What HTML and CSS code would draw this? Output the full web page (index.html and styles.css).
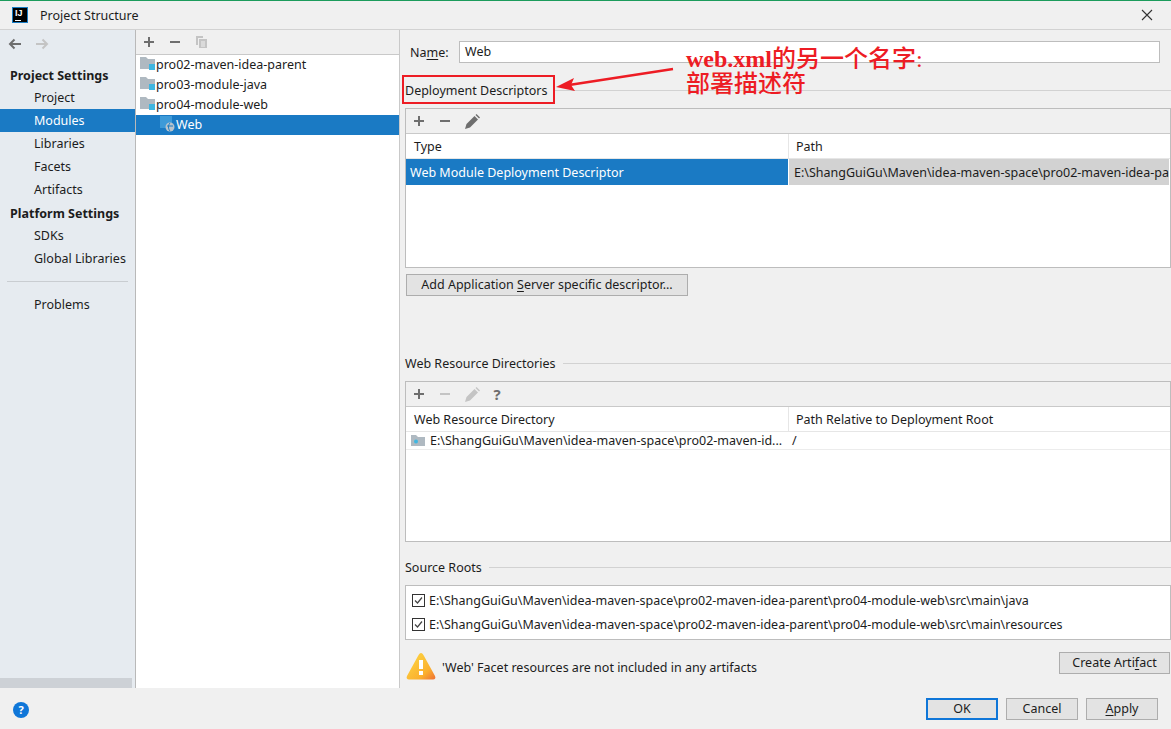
FILE: index.html
```html
<!DOCTYPE html>
<html lang="zh-CN">
<head>
    <meta charset="UTF-8">
    <title>Project Structure</title>
    <link rel="stylesheet" href="styles.css">
</head>
<body>
<div class="dialog">

    <!-- Title bar -->
    <div class="titlebar">
        <div class="logo"><span>IJ</span><i></i></div>
        <span class="title">Project Structure</span>
        <svg class="close" width="12" height="12" viewBox="0 0 12 12"><path d="M1 1l10 10M11 1L1 11" stroke="#333" stroke-width="1.1" fill="none"/></svg>
    </div>

    <div class="main">
        <!-- Left nav -->
        <div class="sidebar">
            <div class="nav-arrows">
                <svg width="14" height="12" viewBox="0 0 14 12"><path d="M13 6H2M6.500 1.500L2 6l4.500 4.500" stroke="#6e6e6e" stroke-width="2" fill="none"/></svg>
                <svg width="14" height="12" viewBox="0 0 14 12"><path d="M1 6h11M7.500 1.500L12 6l-4.500 4.500" stroke="#c4c4c4" stroke-width="2" fill="none"/></svg>
            </div>
            <div class="nav-head">Project Settings</div>
            <div class="nav-item">Project</div>
            <div class="nav-item selected">Modules</div>
            <div class="nav-item">Libraries</div>
            <div class="nav-item">Facets</div>
            <div class="nav-item">Artifacts</div>
            <div class="nav-head second">Platform Settings</div>
            <div class="nav-item">SDKs</div>
            <div class="nav-item">Global Libraries</div>
            <div class="nav-sep"></div>
            <div class="nav-item">Problems</div>
            <div class="side-scroll"></div>
        </div>

        <!-- Module tree -->
        <div class="tree">
            <div class="toolbar tree-tools">
                <svg class="tool" width="12" height="12" viewBox="0 0 12 12"><path d="M6 1v10M1 6h10" stroke="#6e6e6e" stroke-width="2"/></svg>
                <svg class="tool" width="12" height="12" viewBox="0 0 12 12"><path d="M1 6h10" stroke="#6e6e6e" stroke-width="2"/></svg>
                <svg class="tool" width="13" height="14" viewBox="0 0 13 14"><path d="M1 1h7v2H3v7H1z" fill="#c4c4c4"/><path d="M4 4h8v9H4z" fill="#c4c4c4"/><path d="M6 7h4M6 9h4M6 11h4" stroke="#f0f0f0"/></svg>
            </div>
            <div class="tree-row">
                <svg class="folder" width="16" height="14" viewBox="0 0 16 14"><path d="M0 0h6l2 2h7v10H0z" fill="#afb9c1"/><rect x="9" y="7" width="6" height="6" fill="#40b6e0"/></svg>
                pro02-maven-idea-parent
            </div>
            <div class="tree-row">
                <svg class="folder" width="16" height="14" viewBox="0 0 16 14"><path d="M0 0h6l2 2h7v10H0z" fill="#afb9c1"/><rect x="9" y="7" width="6" height="6" fill="#40b6e0"/></svg>
                pro03-module-java
            </div>
            <div class="tree-row">
                <svg class="folder" width="16" height="14" viewBox="0 0 16 14"><path d="M0 0h6l2 2h7v10H0z" fill="#afb9c1"/><rect x="9" y="7" width="6" height="6" fill="#40b6e0"/></svg>
                pro04-module-web
            </div>
            <div class="tree-row selected child">
                <svg class="folder" width="16" height="16" viewBox="0 0 16 16"><rect x="0" y="0" width="12" height="12" fill="#3d9ad8"/><circle cx="10" cy="11" r="4.500" fill="#b9c4cc"/><path d="M7 10h6M10 7c-2 2-2 6 0 8" stroke="#1a7dc4" fill="none"/></svg>
                Web
            </div>
        </div>

        <!-- Facet settings -->
        <div class="content">
            <div class="name-row">
                <label class="name-label">Na<u>m</u>e:</label>
                <div class="name-input">Web</div>
            </div>

            <div class="group-title dd-title"><span>Deployment Descriptors</span></div>
            <div class="table dd-table">
                <div class="toolbar table-tools">
                    <svg class="tool" width="12" height="12" viewBox="0 0 12 12"><path d="M6 1v10M1 6h10" stroke="#6e6e6e" stroke-width="2"/></svg>
                    <svg class="tool" width="12" height="12" viewBox="0 0 12 12"><path d="M1 6h10" stroke="#6e6e6e" stroke-width="2"/></svg>
                    <svg class="tool" width="15" height="15" viewBox="0 0 15 15"><path d="M0 15l1.500-5L9.500 2l3.500 3.500L5 13.500z" fill="#6e6e6e"/><path d="M10.500 1l1-1L15 3.500l-1 1z" fill="#6e6e6e"/></svg>
                </div>
                <div class="thead">
                    <div class="col-a">Type</div>
                    <div class="col-b">Path</div>
                </div>
                <div class="trow dd-row">
                    <div class="col-a cell-blue">Web Module Deployment Descriptor</div>
                    <div class="col-b cell-grey">E:\ShangGuiGu\Maven\idea-maven-space\pro02-maven-idea-pa</div>
                </div>
            </div>
            <button class="btn add-btn">Add Application <u>S</u>erver specific descriptor...</button>

            <div class="group-title wr-title"><span>Web Resource Directories</span></div>
            <div class="table wr-table">
                <div class="toolbar table-tools">
                    <svg class="tool" width="12" height="12" viewBox="0 0 12 12"><path d="M6 1v10M1 6h10" stroke="#6e6e6e" stroke-width="2"/></svg>
                    <svg class="tool" width="12" height="12" viewBox="0 0 12 12"><path d="M1 6h10" stroke="#c4c4c4" stroke-width="2"/></svg>
                    <svg class="tool" width="15" height="15" viewBox="0 0 15 15"><path d="M0 15l1.500-5L9.500 2l3.500 3.500L5 13.500z" fill="#c4c4c4"/><path d="M10.500 1l1-1L15 3.500l-1 1z" fill="#c4c4c4"/></svg>
                    <span class="tool help-mark">?</span>
                </div>
                <div class="thead">
                    <div class="col-a">Web Resource Directory</div>
                    <div class="col-b">Path Relative to Deployment Root</div>
                </div>
                <div class="trow wr-row">
                    <div class="col-a wr-path">
                        <svg class="wr-icon" width="14" height="12" viewBox="0 0 14 12"><path d="M0 0h5l2 2h7v9H0z" fill="#afb9c1"/><circle cx="5" cy="6.500" r="2" fill="#40b6e0"/></svg>
                        <span>E:\ShangGuiGu\Maven\idea-maven-space\pro02-maven-id...</span>
                    </div>
                    <div class="col-b wr-rel">/</div>
                </div>
            </div>

            <div class="group-title sr-title"><span>Source Roots</span></div>
            <div class="roots">
                <div class="root-row">
                    <svg class="check" width="13" height="13" viewBox="0 0 13 13"><rect x=".5" y=".5" width="12" height="12" fill="#fff" stroke="#333"/><path d="M3 6.500l2.500 2.500L10 3.500" stroke="#444" stroke-width="1.200" fill="none"/></svg>
                    <span>E:\ShangGuiGu\Maven\idea-maven-space\pro02-maven-idea-parent\pro04-module-web\src\main\java</span>
                </div>
                <div class="root-row">
                    <svg class="check" width="13" height="13" viewBox="0 0 13 13"><rect x=".5" y=".5" width="12" height="12" fill="#fff" stroke="#333"/><path d="M3 6.500l2.500 2.500L10 3.500" stroke="#444" stroke-width="1.200" fill="none"/></svg>
                    <span>E:\ShangGuiGu\Maven\idea-maven-space\pro02-maven-idea-parent\pro04-module-web\src\main\resources</span>
                </div>
            </div>

            <div class="warn-row">
                <svg width="30" height="27" viewBox="0 0 30 27">
                    <defs><linearGradient id="warnfill" x1="0" y1="0" x2="1" y2="1"><stop offset="0.300" stop-color="#fcc93c"/><stop offset="0.700" stop-color="#fbb02e"/><stop offset="1" stop-color="#ee6f35"/></linearGradient></defs>
                    <path d="M15 0c1 0 2 1 3 3l11 20c1 2 0 3.500-2 3.500H3c-2 0-3-1.500-2-3.500L12 3c1-2 2-3 3-3z" fill="url(#warnfill)"/>
                    <path d="M13 7h4v9h-4zM13 18h4v4h-4z" fill="#fff"/>
                </svg>
                <span class="warn-text">'Web' Facet resources are not included in any artifacts</span>
                <button class="btn artifact-btn">Create Arti<u>f</u>act</button>
            </div>
        </div>
    </div>

    <!-- Footer -->
    <div class="footer">
        <div class="help">?</div>
        <div class="footer-btns">
            <button class="btn foot-btn default">OK</button>
            <button class="btn foot-btn">Cancel</button>
            <button class="btn foot-btn"><u>A</u>pply</button>
        </div>
    </div>

    <!-- Red annotation drawn on the screenshot -->
    <div class="note-box"></div>
    <svg class="note-arrow" width="125" height="30" viewBox="0 0 125 30">
        <path d="M118 3L14 19" stroke="#ed1c24" stroke-width="2.500" fill="none"/>
        <path d="M1 21l18-9-3 7 4 6z" fill="#ed1c24"/>
    </svg>
    <div class="note-text"><b>web.xml</b>的另一个名字:<br>部署描述符</div>
</div>
</body>
</html>
```

FILE: styles.css
```css
* {
    box-sizing: border-box;
}
html, body {
    margin: 0;
    height: 100%;
}
body {
    font-family: "Noto Sans", "Noto Sans CJK SC", sans-serif;
    font-size: 12.5px;
    color: #1c1c1c;
    background: #f0f0f0;
    overflow: hidden;
}
.dialog {
    position: relative;
    width: 1171px;
    height: 729px;
    display: flex;
    flex-direction: column;
}
u {
    text-underline-offset: 2px;
}

/* title bar */
.titlebar {
    height: 30px;
    flex: none;
    display: flex;
    align-items: center;
    padding: 0 18px 0 12px;
    border-top: 1px solid #1c9c5c;
    border-bottom: 1px solid #d2d2d2;
    background: #f0f0f0;
}
.logo {
    width: 16px;
    height: 16px;
    background: #000;
    outline: 1px solid #1a7dc4;
    outline-offset: -1px;
    color: #fff;
    font-family: "Liberation Sans", sans-serif;
    font-size: 9px;
    font-weight: bold;
    line-height: 9px;
    padding: 2px 0 0 3px;
    position: relative;
}
.logo i {
    position: absolute;
    left: 3px;
    bottom: 2px;
    width: 6px;
    height: 1px;
    background: #fff;
}
.title {
    margin-left: 12px;
}
.close {
    margin-left: auto;
}

.main {
    flex: 1;
    display: flex;
    min-height: 0;
}

/* left nav */
.sidebar {
    width: 136px;
    flex: none;
    background: #e6ebf0;
    border-right: 1px solid #b9b9b9;
    position: relative;
}
.nav-arrows {
    height: 35px;
    padding: 8px 0 0 8px;
    display: flex;
    gap: 13px;
}
.nav-head {
    height: 21px;
    line-height: 22px;
    padding-left: 10px;
    font-weight: bold;
}
.nav-head.second {
    margin-top: 1px;
    height: 22px;
    line-height: 24px;
}
.nav-item {
    height: 23px;
    line-height: 23px;
    padding-left: 34px;
}
.nav-item.selected {
    background: #1a7ac4;
    color: #fff;
}
.nav-sep {
    height: 1px;
    margin: 11px 7px 11px 7px;
    background: #c9cdd1;
}
.side-scroll {
    position: absolute;
    left: 0;
    right: 3px;
    bottom: 0;
    height: 10px;
    background: #cdd1d6;
}

/* module tree */
.tree {
    width: 264px;
    flex: none;
    background: #fff;
    border-right: 1px solid #c9c9c9;
}
.toolbar {
    display: flex;
    align-items: center;
    background: #f0f0f0;
}
.tree-tools {
    height: 25px;
    padding-left: 7px;
    gap: 14px;
    border-bottom: 1px solid #c9c9c9;
}
.tree-row {
    height: 20px;
    display: flex;
    align-items: center;
    padding: 0 0 2px 4px;
}
.tree-row.child {
    padding-left: 24px;
}
.tree-row.selected {
    background: #1a7ac4;
    color: #fff;
}

/* right panel */
.content {
    flex: 1;
    min-width: 0;
    padding: 11px 0 0 5px;
    background: #f0f0f0;
}
.name-row {
    display: flex;
    align-items: center;
    height: 22px;
    padding-left: 5px;
}
.name-label {
    width: 49px;
}
.name-input {
    width: 701px;
    height: 22px;
    line-height: 20px;
    padding-left: 5px;
    background: #fff;
    border: 1px solid #bdbdbd;
}
.group-title {
    display: flex;
    align-items: center;
    gap: 7px;
    height: 18px;
}
.group-title::after {
    content: "";
    flex: 1;
    height: 1px;
    background: #d2d2d2;
}
.dd-title {
    margin-top: 18px;
}
.table {
    border: 1px solid #bdbdbd;
    background: #fff;
    width: 766px;
    overflow: hidden;
}
.dd-table {
    margin-top: 9px;
    height: 160px;
}
.wr-table {
    height: 161px;
    margin-top: 9px;
}
.table-tools {
    height: 25px;
    padding-left: 7px;
    gap: 14px;
    border-bottom: 1px solid #c9c9c9;
}
.help-mark {
    width: 12px;
    margin-left: -3px;
    color: #6e6e6e;
    font-size: 15px;
    font-weight: bold;
    text-align: center;
}
.thead {
    height: 25px;
    display: flex;
    align-items: center;
    border-bottom: 1px solid #e6e6e6;
}
.col-a {
    width: 382px;
    flex: none;
    padding-left: 8px;
}
.col-b {
    flex: 1;
    min-width: 0;
    padding-left: 7px;
    white-space: nowrap;
}
.thead .col-b {
    border-left: 1px solid #e6e6e6;
    line-height: 22px;
    padding-top: 2px;
}
.dd-row {
    height: 26px;
    display: flex;
    padding-right: 1px;
}
.cell-blue {
    background: #1a7ac4;
    color: #fff;
    line-height: 28px;
    padding-left: 4px;
}
.cell-grey {
    background: #d2d2d2;
    margin-left: 1px;
    line-height: 28px;
    padding-left: 5px;
}
.btn {
    font: inherit;
    color: #1c1c1c;
    background: #e3e3e3;
    border: 1px solid #adadad;
    padding: 0 0 2px;
    height: 22px;
}
.add-btn {
    display: block;
    width: 282px;
    margin: 6px 0 0 1px;
}
.wr-title {
    margin-top: 58px;
}
.wr-row {
    height: 18px;
    display: flex;
    align-items: center;
    border-bottom: 1px solid #ececec;
}
.wr-path {
    display: flex;
    align-items: center;
    gap: 5px;
    padding-left: 5px;
    white-space: nowrap;
}
.wr-icon {
    flex: none;
}
.wr-rel {
    padding-left: 4px;
}
.sr-title {
    margin-top: 16px;
}
.roots {
    width: 766px;
    height: 55px;
    margin-top: 9px;
    padding-top: 2px;
    background: #fff;
    border: 1px solid #bdbdbd;
    overflow: hidden;
}
.root-row {
    height: 24px;
    display: flex;
    align-items: center;
    gap: 4px;
    padding-left: 6px;
    white-space: nowrap;
}
.warn-row {
    display: flex;
    align-items: flex-start;
    margin-top: 13px;
    padding-left: 1px;
    height: 34px;
}
.warn-text {
    margin-left: 6px;
    margin-top: 6px;
}
.artifact-btn {
    margin: -1px 1px 0 auto;
    width: 111px;
}

/* footer */
.footer {
    height: 41px;
    flex: none;
    display: flex;
    align-items: center;
    padding: 1px 13px 0 13px;
    background: #f0f0f0;
}
.help {
    width: 16px;
    height: 16px;
    margin-top: 2px;
    border-radius: 50%;
    background: #0f76d8;
    color: #fff;
    font-size: 11px;
    font-weight: bold;
    line-height: 16px;
    text-align: center;
}
.footer-btns {
    margin-left: auto;
    display: flex;
    gap: 8px;
}
.foot-btn {
    width: 72px;
}
.foot-btn.default {
    border: 2px solid #0f76d8;
}

/* annotation */
.note-box {
    position: absolute;
    left: 402px;
    top: 75px;
    width: 153px;
    height: 29px;
    border: 2px solid #ed1c24;
}
.note-arrow {
    position: absolute;
    left: 555px;
    top: 66px;
}
.note-text {
    position: absolute;
    left: 686px;
    top: 47px;
    color: #ed1c24;
    font-family: "Liberation Serif", "Noto Sans CJK SC", serif;
    font-size: 24px;
    font-weight: 500;
    line-height: 25px;
    white-space: nowrap;
}
```
